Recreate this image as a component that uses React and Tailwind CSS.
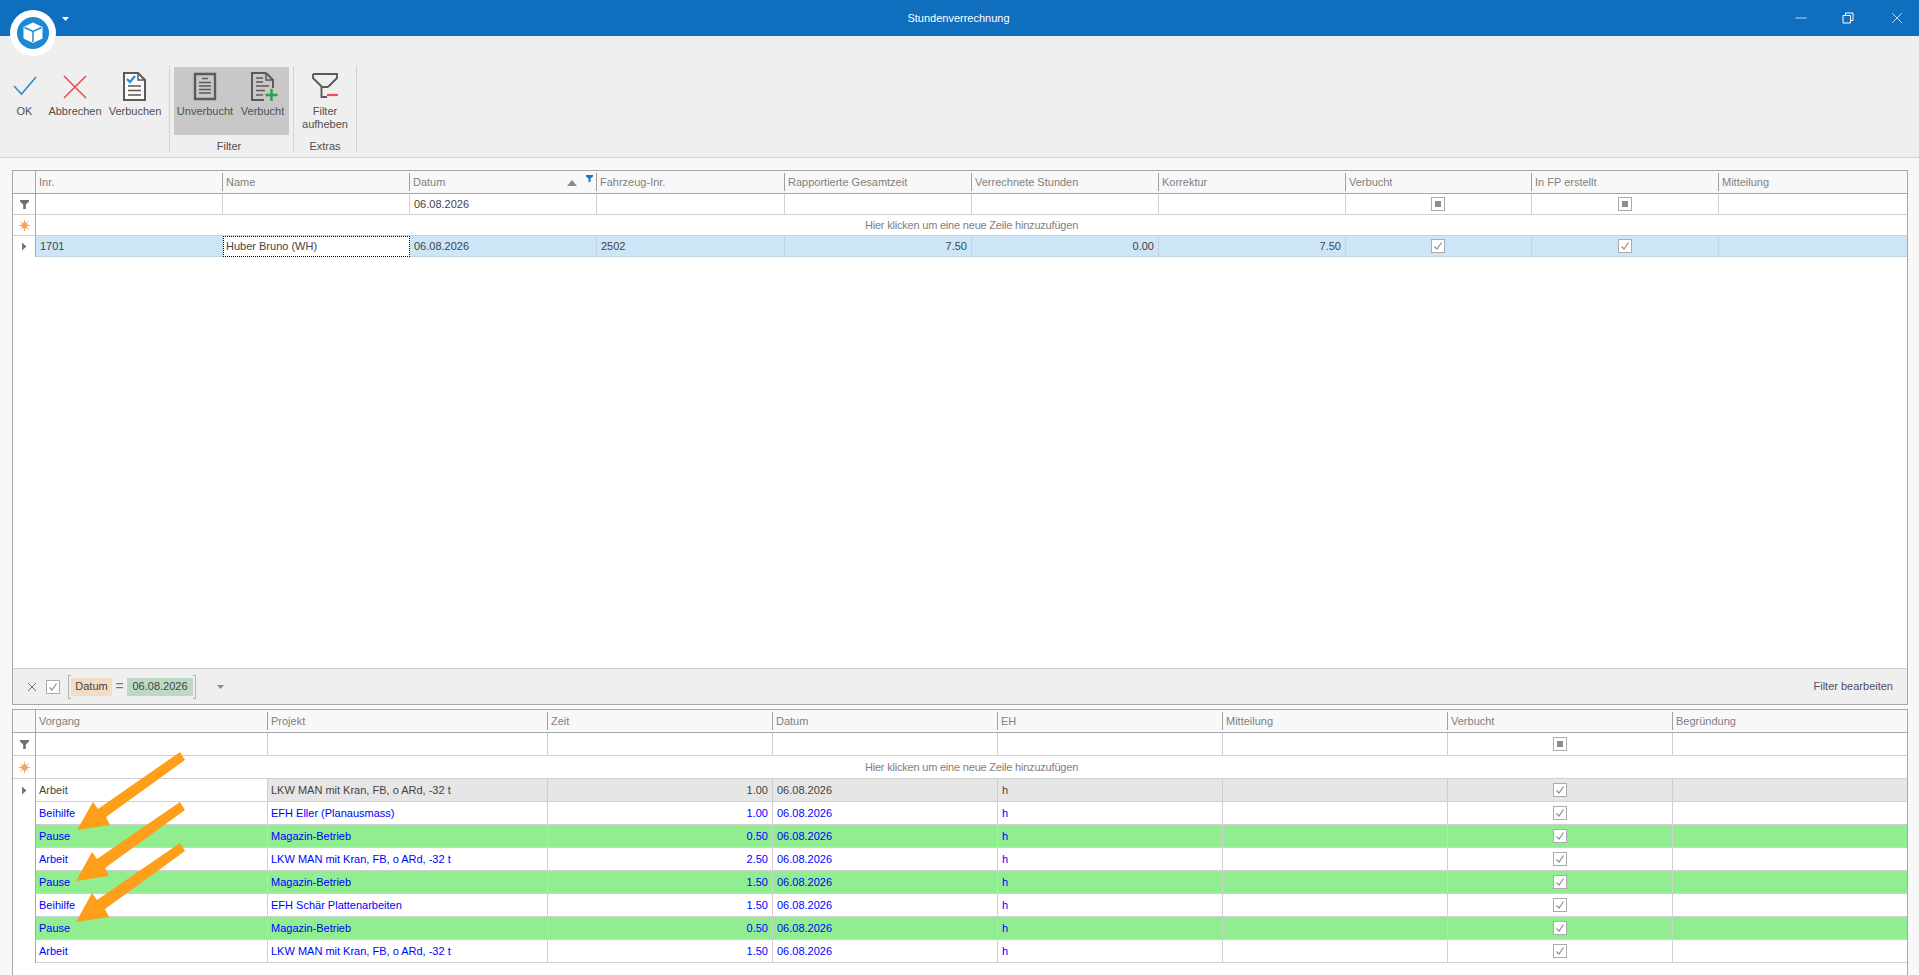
import { Minus, X } from "lucide-react";

const topCols = "grid grid-cols-[23px_187px_187px_187px_188px_187px_187px_187px_186px_187px_1fr]";
const lowCols = "grid grid-cols-[23px_232px_280px_225px_225px_225px_225px_225px_1fr]";

function Box({ mode }) {
  return (
    <span className="flex h-[14px] w-[14px] items-center justify-center border border-[#ababab] bg-white">
      {mode === "some" ? (
        <span className="h-[6px] w-[6px] bg-[#8c8c8c]" />
      ) : (
        <svg width="10" height="10" viewBox="0 0 10 10" fill="none" stroke="#8f8f8f" strokeWidth="1.2">
          <path d="M1.5 5.5 L4 8 L8.5 1.5" />
        </svg>
      )}
    </span>
  );
}

function Funnel() {
  return (
    <svg width="11" height="11" viewBox="0 0 11 11" fill="#6f6f6f">
      <path d="M1 1 H10 V2.5 L6.8 5.5 V10 H4.2 V5.5 L1 2.5 Z" />
    </svg>
  );
}

function Star() {
  return (
    <svg width="11" height="11" viewBox="0 0 11 11" fill="#f7a35c" stroke="#f7a35c">
      <circle cx="5.5" cy="5.5" r="2.7" />
      <path d="M5.5 0 V11 M0 5.5 H11 M1.6 1.6 L9.4 9.4 M9.4 1.6 L1.6 9.4" strokeWidth="1" />
    </svg>
  );
}

function Pointer() {
  return (
    <svg width="6" height="9" viewBox="0 0 6 9" fill="#777">
      <path d="M1 0.5 L5.5 4.5 L1 8.5 Z" />
    </svg>
  );
}

function Indicator({ children, line }) {
  return (
    <div className={`flex items-center justify-center border-r border-[#a8a8a8] ${line ? "border-b border-b-[#d0d0d0]" : ""}`}>
      {children}
    </div>
  );
}

function Header({ cols, labels }) {
  return (
    <div className={`${cols} h-[23px] border-b border-[#a8a8a8] bg-[#f8f8f8] text-[#808080]`}>
      <div className="border-r border-[#a8a8a8]" />
      {labels.map((label, i) => (
        <div
          key={label + i}
          className={`relative my-[2px] flex items-center pl-[3px] ${i < labels.length - 1 ? "border-r border-[#a0a0a0]" : ""}`}
        >
          {label}
          {label === "Datum" && cols === topCols && (
            <>
              <svg className="absolute right-[19px] top-[7px]" width="10" height="6" viewBox="0 0 10 6" fill="#8a8a8a">
                <path d="M5 0 L10 6 H0 Z" />
              </svg>
              <svg className="absolute right-[3px] top-[2px]" width="7" height="7" viewBox="0 0 7 7" fill="#1a73c4">
                <path d="M0 0 H7 V1.5 L4.5 3.5 V7 H2.5 V3.5 L0 1.5 Z" />
              </svg>
            </>
          )}
        </div>
      ))}
    </div>
  );
}

function FilterRow({ cols, h, cells }) {
  return (
    <div className={`${cols} ${h} bg-white`}>
      <Indicator line>
        <Funnel />
      </Indicator>
      {cells.map((c, i) => {
        const box = c === "box" || c === "boxl";
        return (
          <div
            key={i}
            className={`flex items-center border-b border-[#d0d0d0] ${i < cells.length - 1 ? "border-r" : ""} ${box ? "justify-center" : "pl-[4px]"} ${c === "boxl" ? "pr-[2px]" : ""}`}
          >
            {box ? <Box mode="some" /> : c}
          </div>
        );
      })}
    </div>
  );
}

function NewRow({ cols, h }) {
  return (
    <div className={`${cols} ${h} bg-white`}>
      <Indicator line>
        <Star />
      </Indicator>
      <div className="col-span-full col-start-2 flex items-center justify-center border-b border-[#d0d0d0] pt-[1px] tracking-[-0.2px] text-[#808080]">
        Hier klicken um eine neue Zeile hinzuzufügen
      </div>
    </div>
  );
}

const lowerRows = [
  ["Arbeit", "LKW MAN mit Kran, FB, o ARd, -32 t", "1.00", "current"],
  ["Beihilfe", "EFH Eller (Planausmass)", "1.00", "plain"],
  ["Pause", "Magazin-Betrieb", "0.50", "pause"],
  ["Arbeit", "LKW MAN mit Kran, FB, o ARd, -32 t", "2.50", "plain"],
  ["Pause", "Magazin-Betrieb", "1.50", "pause"],
  ["Beihilfe", "EFH Schär Plattenarbeiten", "1.50", "plain"],
  ["Pause", "Magazin-Betrieb", "0.50", "pause"],
  ["Arbeit", "LKW MAN mit Kran, FB, o ARd, -32 t", "1.50", "plain"],
];

function LowerRow({ row }) {
  const [vorgang, projekt, zeit, kind] = row;
  const current = kind === "current";
  const bg = current ? "bg-[#e6e6e6]" : kind === "pause" ? "bg-[#90ee90]" : "bg-white";
  const text = current ? "text-[#444444]" : "text-[#0000ff]";
  const cell = `flex items-center border-r border-b border-[#d0d0d0] ${bg}`;
  return (
    <div className={`${lowCols} h-[23px] ${text}`}>
      <Indicator>{current && <Pointer />}</Indicator>
      <div className={`flex items-center border-r border-b border-[#d0d0d0] pl-[3px] ${kind === "pause" ? "bg-[#90ee90]" : "bg-white"}`}>{vorgang}</div>
      <div className={`${cell} pl-[3px]`}>{projekt}</div>
      <div className={`${cell} justify-end pr-[4px]`}>{zeit}</div>
      <div className={`${cell} pl-[4px]`}>06.08.2026</div>
      <div className={`${cell} pl-[4px]`}>h</div>
      <div className={cell} />
      <div className={`${cell} justify-center`}>
        <Box />
      </div>
      <div className={`flex border-b border-[#d0d0d0] ${bg}`} />
    </div>
  );
}

function RibbonButton({ width, lines, top = "pt-[6px]", children }) {
  return (
    <div className={`flex ${width} ${top} flex-col items-center text-center leading-[13px] text-[#505050]`}>
      <div className="h-[33px]">{children}</div>
      {lines.map((l) => (
        <span key={l} className="whitespace-nowrap">
          {l}
        </span>
      ))}
    </div>
  );
}

function DocIcon({ check, plus }) {
  return (
    <svg width="30" height="30" viewBox="0 0 30 30" fill="none">
      {plus ? (
        <path d="M18 1 H4 V28 H16 M18 1 L25 8 V16" stroke="#5a5a5a" strokeWidth="2" />
      ) : (
        <path d="M4 1 H18 L25 8 V28 H4 Z" fill="#fafafa" stroke="#5a5a5a" strokeWidth="2" />
      )}
      <path d="M18 1 V8 H25" stroke="#5a5a5a" strokeWidth="1.5" />
      {check ? (
        <path d="M7 7 L10 10 L15 4" stroke="#2a8dd4" strokeWidth="2.2" />
      ) : (
        <path d="M8 6 H15 M8 10 H15" stroke="#5a5a5a" strokeWidth="1.6" />
      )}
      <path d={plus ? "M8 14 H21 M8 18.5 H17 M8 23 H15" : "M8 14 H21 M8 18.5 H21 M8 23 H21"} stroke="#5a5a5a" strokeWidth="1.7" />
      {plus && <path d="M23.5 17 V29 M17.5 23 H29.5" stroke="#2f9e4f" strokeWidth="2.4" />}
    </svg>
  );
}

export default function App() {
  return (
    <div className="relative flex h-[975px] w-[1919px] flex-col overflow-hidden bg-[#f8f8f8] font-['Liberation_Sans',sans-serif] text-[11px] text-[#444444]">
      {/* title bar */}
      <div className="flex h-[36px] items-center bg-[#106ebe] text-white">
        <div className="w-[1777px] shrink-0 pl-[140px] text-center">Stundenverrechnung</div>
        <div className="flex flex-1 items-center">
          <span className="flex w-[48px] justify-center">
            <Minus size={18} strokeWidth={1} />
          </span>
          <span className="flex w-[46px] justify-center">
            <svg width="12" height="12" viewBox="0 0 12 12" fill="none" stroke="white">
              <path d="M1 3.5 H8.5 V11 H1 Z M3.5 3.5 V1 H11 V8.5 H8.5" />
            </svg>
          </span>
          <span className="flex w-[48px] justify-center pl-[4px]">
            <X size={18} strokeWidth={1} />
          </span>
        </div>
      </div>

      {/* ribbon */}
      <div className="flex h-[122px] border-b border-[#d2d2d2] bg-[#efefef] pt-[30px]">
        <div className="flex h-[87px] w-[170px] border-r border-[#d2d2d2]">
          <RibbonButton width="w-[49px]" lines={["OK"]}>
            <svg width="26" height="30" viewBox="0 0 26 30" fill="none" stroke="#2a8dd4" strokeWidth="1.6">
              <path d="M2 14 L9.5 22 L24 5" />
            </svg>
          </RibbonButton>
          <RibbonButton width="w-[52px]" lines={["Abbrechen"]}>
            <svg width="26" height="30" viewBox="0 0 26 30" fill="none" stroke="#f04b4b" strokeWidth="1.6">
              <path d="M2 4 L24 26 M24 4 L2 26" />
            </svg>
          </RibbonButton>
          <RibbonButton width="w-[68px]" lines={["Verbuchen"]}>
            <DocIcon check />
          </RibbonButton>
        </div>
        <div className="flex h-[87px] w-[124px] flex-col border-r border-[#d2d2d2] pl-[4px]">
          <div className="mt-[1px] flex h-[68px] w-[115px] shrink-0 bg-[#c8c8c8]">
            <RibbonButton width="w-[62px]" top="pt-[5px]" lines={["Unverbucht"]}>
              <svg width="24" height="30" viewBox="0 0 24 30" fill="none" stroke="#5a5a5a">
                <path d="M2 2 H22 V27 H2 Z" strokeWidth="2.4" />
                <path d="M9 6.5 H15 M6 10.5 H18 M6 14 H18 M6 17.5 H18 M6 21 H18" strokeWidth="1.6" />
              </svg>
            </RibbonButton>
            <RibbonButton width="w-[53px]" top="pt-[5px]" lines={["Verbucht"]}>
              <DocIcon plus />
            </RibbonButton>
          </div>
          <div className="flex flex-1 items-center justify-center pr-[9px] pt-[3px] text-[#505050]">Filter</div>
        </div>
        <div className="flex h-[87px] w-[63px] flex-col border-r border-[#d2d2d2]">
          <div className="h-[69px] shrink-0">
            <RibbonButton width="w-[62px]" lines={["Filter", "aufheben"]}>
              <svg width="28" height="28" viewBox="0 0 28 28" fill="none">
                <path d="M2 2 H26 V6 L17 15 M11 15 L2 6 V2 M11 15 H17 M10.5 15 V25 H16" stroke="#5a5a5a" strokeWidth="1.9" />
                <path d="M16 23 H27" stroke="#e8505b" strokeWidth="2.2" />
              </svg>
            </RibbonButton>
          </div>
          <div className="flex flex-1 items-center justify-center pt-[3px] text-[#505050]">Extras</div>
        </div>
      </div>

      {/* grids */}
      <div className="flex min-h-0 flex-1 flex-col pl-[12px] pt-[12px]">
        <div className="h-[498px] w-[1896px] border-x border-t border-[#a8a8a8] bg-white">
          <Header
            cols={topCols}
            labels={[
              "Inr.",
              "Name",
              "Datum",
              "Fahrzeug-Inr.",
              "Rapportierte Gesamtzeit",
              "Verrechnete Stunden",
              "Korrektur",
              "Verbucht",
              "In FP erstellt",
              "Mitteilung",
            ]}
          />
          <FilterRow
            cols={topCols}
            h="h-[21px]"
            cells={["", "", "06.08.2026", "", "", "", "", "boxl", "box", ""]}
          />
          <NewRow cols={topCols} h="h-[21px]" />
          <div className={`${topCols} h-[21px]`}>
            <Indicator>
              <Pointer />
            </Indicator>
            <div className="flex items-center border-r border-b border-[#c2d4e0] bg-[#cde6f7] pl-[4px]">1701</div>
            <div className="flex items-center border border-dotted border-black bg-white pl-[2px]">Huber Bruno (WH)</div>
            <div className="flex items-center border-r border-b border-[#c2d4e0] bg-[#cde6f7] pl-[4px]">06.08.2026</div>
            <div className="flex items-center border-r border-b border-[#c2d4e0] bg-[#cde6f7] pl-[4px]">2502</div>
            <div className="flex items-center justify-end border-r border-b border-[#c2d4e0] bg-[#cde6f7] pr-[4px]">7.50</div>
            <div className="flex items-center justify-end border-r border-b border-[#c2d4e0] bg-[#cde6f7] pr-[4px]">0.00</div>
            <div className="flex items-center justify-end border-r border-b border-[#c2d4e0] bg-[#cde6f7] pr-[4px]">7.50</div>
            <div className="flex items-center justify-center border-r border-b border-[#c2d4e0] bg-[#cde6f7] pr-[2px]">
              <Box />
            </div>
            <div className="flex items-center justify-center border-r border-b border-[#c2d4e0] bg-[#cde6f7]">
              <Box />
            </div>
            <div className="border-b border-[#c2d4e0] bg-[#cde6f7]" />
          </div>
        </div>

        {/* filter panel */}
        <div className="flex h-[37px] w-[1896px] items-center border border-t-[#d0d0d0] border-[#a8a8a8] bg-[#efefef]">
          <svg className="ml-[14px]" width="10" height="10" viewBox="0 0 10 10" fill="none" stroke="#777" strokeWidth="1">
            <path d="M1 1 L9 9 M9 1 L1 9" />
          </svg>
          <span className="ml-[9px]">
            <Box />
          </span>
          <div className="ml-[8px] flex h-[24px] w-[129px] items-center">
            <span className="h-[24px] w-[3px] border-y border-l border-[#b4b4b4]" />
            <span className="flex h-[18px] w-[41px] items-center justify-center bg-[#f2dcc5]">Datum</span>
            <span className="flex w-[15px] justify-center text-[14px] text-[#777]">=</span>
            <span className="flex h-[18px] w-[66px] items-center justify-center bg-[#bcd9c3]">06.08.2026</span>
            <span className="h-[24px] w-[3px] border-y border-r border-[#b4b4b4]" />
          </div>
          <svg className="ml-[20px]" width="7" height="4" viewBox="0 0 7 4" fill="#8a8a8a">
            <path d="M0 0 H7 L3.5 4 Z" />
          </svg>
          <span className="ml-auto pr-[14px] text-[#505060]">Filter bearbeiten</span>
        </div>

        <div className="mt-[4px] w-[1896px] flex-1 border-x border-t border-[#a8a8a8] bg-white">
          <Header
            cols={lowCols}
            labels={["Vorgang", "Projekt", "Zeit", "Datum", "EH", "Mitteilung", "Verbucht", "Begründung"]}
          />
          <FilterRow cols={lowCols} h="h-[23px]" cells={["", "", "", "", "", "", "box", ""]} />
          <NewRow cols={lowCols} h="h-[23px]" />
          {lowerRows.map((row, i) => (
            <LowerRow key={i} row={row} />
          ))}
        </div>
      </div>

      {/* logo over title bar and ribbon */}
      <div className="absolute left-[10px] top-[10px] flex h-[46px] w-[46px] items-center justify-center rounded-full bg-white">
        <svg width="32" height="32" viewBox="0 0 32 32">
          <circle cx="16" cy="16" r="16" fill="#1b8ad3" />
          <path d="M16 5.5 L25.5 10 V21.5 L16 26 L6.5 21.5 V10 Z" fill="white" />
          <path d="M7.5 10.5 L16 14.5 L24.5 10.5 M16 14.5 V25" fill="none" stroke="#1b8ad3" strokeWidth="1.5" />
        </svg>
      </div>
      <svg className="absolute left-[62px] top-[17px]" width="7" height="4" viewBox="0 0 7 4" fill="white">
        <path d="M0 0 H7 L3.5 4 Z" />
      </svg>

      {/* annotation arrows */}
      <svg className="pointer-events-none absolute left-0 top-0" width="1919" height="975" fill="#ff9e1b">
        <path d="M180 752 L185 760 L106 817 L110 825 L77 830 L93 802 L98 809 Z" />
        <path d="M180 802 L185 810 L105 868 L109 876 L76 881 L92 852 L97 859 Z" />
        <path d="M180 843 L185 851 L105 909 L109 917 L76 922 L92 893 L97 900 Z" />
      </svg>
    </div>
  );
}
